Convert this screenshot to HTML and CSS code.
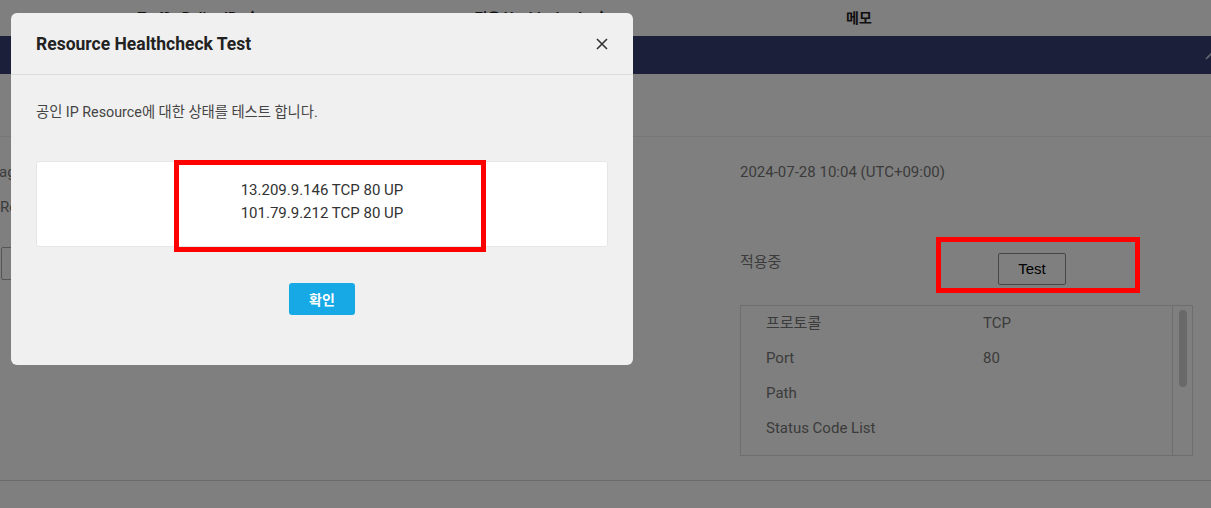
FILE: index.html
```html
<!DOCTYPE html>
<html lang="ko">
<head>
    <meta charset="UTF-8">
    <meta name="viewport" content="width=device-width, initial-scale=1.0">
    <title>Traffic Policy - Resource Healthcheck</title>
    <link rel="stylesheet" href="styles.css">
</head>
<body>
    <div class="page">
        <!-- Entête de la liste -->
        <div class="list-head">
            <div class="th">Traffic Policy IP <span class="sort">▲</span></div>
            <div class="th">적용 Health check <span class="sort">▲</span></div>
            <div class="th">메모</div>
            <div class="th"></div>
        </div>

        <!-- Barre du détail -->
        <div class="detail-bar">
            <svg class="bar-chevron" width="14" height="9" viewBox="0 0 14 9">
                <polyline points="1,8 7,2 13,8" fill="none" stroke="#c3cde0" stroke-width="1.6"/>
            </svg>
        </div>

        <div class="tabs"></div>

        <!-- Détail -->
        <section class="detail">
            <div class="cell left"><span class="cut">Tag</span></div>
            <div class="cell wide">2024-07-28 10:04 (UTC+09:00)</div>

            <div class="cell left">Resource</div>
            <div class="cell wide"></div>

            <div class="cell left"><button class="ghost-btn">편집</button></div>
            <div class="cell state">적용중</div>
            <div class="cell"><button class="test-btn">Test</button></div>

            <div class="cell left"></div>
            <div class="panel">
                <div class="panel-rows">
                    <div class="prow"><span>프로토콜</span><span>TCP</span></div>
                    <div class="prow"><span>Port</span><span>80</span></div>
                    <div class="prow"><span>Path</span><span></span></div>
                    <div class="prow"><span>Status Code List</span><span></span></div>
                </div>
                <div class="scroll-track"><div class="scroll-thumb"></div></div>
            </div>
        </section>
    </div>

    <!-- Fond assombri -->
    <div class="dim"></div>
    <div class="mark mark-test"></div>

    <!-- Fenêtre modale -->
    <div class="modal">
        <div class="modal-head">
            <h2>Resource Healthcheck Test</h2>
            <svg class="close" width="14" height="14" viewBox="0 0 14 14">
                <path d="M2 2 L12 12 M12 2 L2 12" stroke="#333" stroke-width="1.6" fill="none"/>
            </svg>
        </div>
        <div class="modal-body">
            <p class="desc">공인 IP Resource에 대한 상태를 테스트 합니다.</p>
            <div class="result">
                <div>13.209.9.146 TCP 80 UP</div>
                <div>101.79.9.212 TCP 80 UP</div>
            </div>
            <div class="actions">
                <button class="ok-btn">확인</button>
            </div>
        </div>
        <div class="mark mark-result"></div>
    </div>
</body>
</html>
```

FILE: styles.css
```css
body {
    margin: 0;
    padding: 0;
    height: 508px;
    overflow: hidden;
    background-color: #fff;
    font-family: Roboto, "Noto Sans CJK KR", sans-serif;
}

/* Entête de la liste */
.list-head {
    display: grid;
    grid-template-columns: 396px 290px 346px 1fr;
    height: 36px;
    align-items: center;
    padding-bottom: 2px;
    box-sizing: border-box;
    font-size: 14px;
    font-weight: 700;
    color: #222;
    text-align: center;
}

.sort {
    font-size: 12px;
    margin-left: 6px;
    position: relative;
    top: -2px;
}

.detail-bar {
    height: 38px;
    background-color: #363e74;
    display: flex;
    align-items: center;
    justify-content: flex-end;
}

.bar-chevron {
    margin-right: -8px;
}

.tabs {
    height: 62px;
    border-bottom: 1px solid #eee;
}

/* Grille du détail */
.detail {
    display: grid;
    grid-template-columns: 740px 258px 1fr;
    grid-template-rows: 35px 35px 73px auto;
    padding: 25px 0 24px;
    border-bottom: 1px solid #d6d6d6;
    font-size: 15px;
    line-height: 20px;
    color: #777;
}

.cell.wide {
    grid-column: 2 / 4;
}

.cut {
    margin-left: -9px;
}

.ghost-btn {
    margin: 15px 0 0 1px;
    height: 33px;
    width: 60px;
    background: #fff;
    border: 1px solid #aaa;
    border-radius: 2px;
    font-size: 14px;
}

.state {
    margin-top: 20px;
}

.test-btn {
    margin-top: 21px;
    width: 68px;
    height: 32px;
    padding-bottom: 2px;
    background: #fff;
    border: 1px solid #8f8f8f;
    border-radius: 2px;
    font-family: "Liberation Sans", Arial, sans-serif;
    font-size: 15px;
    color: #000;
}

.panel {
    grid-column: 2 / 4;
    width: 453px;
    height: 151px;
    box-sizing: border-box;
    border: 1px solid #dcdcdc;
    display: flex;
}

.panel-rows {
    flex: 1;
    padding-left: 25px;
    margin-top: -1px;
}

.prow {
    display: grid;
    grid-template-columns: 217px 1fr;
    height: 35px;
    align-items: center;
}

.scroll-track {
    width: 13px;
    border-left: 1px solid #dcdcdc;
    padding: 4px 0 0 6px;
}

.scroll-thumb {
    width: 8px;
    height: 77px;
    border-radius: 4px;
    background-color: #d2d2d2;
}

/* Fond assombri */
.dim {
    position: fixed;
    inset: 0;
    background-color: rgba(0, 0, 0, 0.5);
}

/* Cadres rouges */
.mark {
    position: absolute;
    box-sizing: border-box;
    border: 5px solid #f00;
}

.mark-test {
    left: 936px;
    top: 237px;
    width: 204px;
    height: 56px;
}

.mark-result {
    left: 163px;
    top: 147px;
    width: 312px;
    height: 92px;
}

/* Fenêtre modale */
.modal {
    position: fixed;
    left: 11px;
    top: 13px;
    width: 622px;
    background-color: #f0f0f0;
    border-radius: 6px;
}

.modal-head {
    height: 61px;
    border-bottom: 1px solid #dcdcdc;
    display: flex;
    align-items: center;
    justify-content: space-between;
    padding: 0 24px 0 25px;
}

.modal-head h2 {
    margin: 0;
    font-size: 17.5px;
    font-weight: 700;
    color: #222;
}

.modal-body {
    padding: 27px 25px 50px;
}

.desc {
    margin: 0;
    font-size: 14.3px;
    line-height: 20px;
    color: #444;
}

.result {
    margin-top: 39px;
    padding: 17px 0 21px;
    background-color: #fff;
    border: 1px solid #e6e6e6;
    border-radius: 3px;
    text-align: center;
    font-size: 15px;
    line-height: 23px;
    color: #333;
}

.actions {
    margin-top: 36px;
    text-align: center;
}

.ok-btn {
    width: 66px;
    height: 32px;
    border: none;
    border-radius: 3px;
    background-color: #17a9e6;
    color: #fff;
    font-family: Roboto, "Noto Sans CJK KR", sans-serif;
    font-size: 14px;
    font-weight: 700;
}
```
